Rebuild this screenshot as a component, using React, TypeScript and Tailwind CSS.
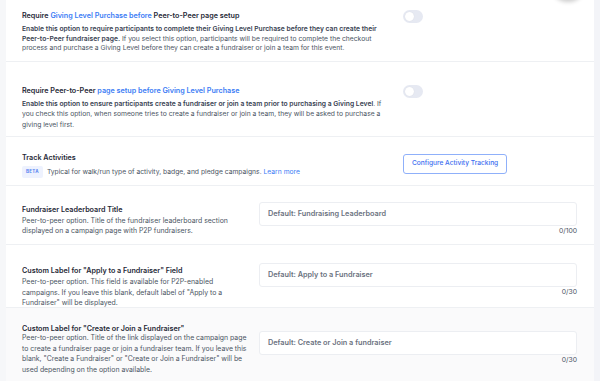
import React from "react";

const Toggle = () => (
  <div className="w-[20px] h-[13px] rounded-full bg-[#e6e9f2] p-[2px] flex items-center">
    <div className="w-[9px] h-[9px] rounded-full bg-white shadow-[0_0_1px_rgba(0,0,0,0.1)]" />
  </div>
);

const InputCol = ({ placeholder, max, mt }: { placeholder: string; max: string; mt: string }) => (
  <div className={`w-[318px] ml-auto flex flex-col ${mt}`}>
    <div className="h-[24px] rounded-[3px] border border-[#eceef2] bg-white flex items-center px-[8px] text-[7.3px] font-semibold text-[#6b7280]">
      {placeholder}
    </div>
    <div className="text-right text-[6.8px] text-[#4b5563] leading-[10px]">{max}</div>
  </div>
);

export default function App() {
  return (
    <div
      className="w-[600px] h-[381px] overflow-hidden bg-[#f4f5f8] flex relative"
      style={{ fontFamily: "Inter, 'Noto Sans', sans-serif" }}
    >
      <div className="w-[6px] shrink-0 bg-[#f6f7f9]" />
      <div className="w-[588px] shrink-0 bg-white flex flex-col">
        {/* Row 1 */}
        <div className="h-[62px] border-b border-[#eef0f3] flex pl-4 pt-[11px]">
          <div className="w-[362px]">
            <div className="text-[7.2px] leading-[10px] font-semibold text-[#1f2937]">
              Require <span className="text-[#3b7cf5]">Giving Level Purchase before</span> Peer-to-Peer page setup
            </div>
            <div className="mt-[3px] text-[6.75px] leading-[9.7px] text-[#4b5563]">
              <span className="font-semibold text-[#374151]">
                Enable this option to require participants to complete their Giving Level Purchase before they can create their Peer-to-Peer fundraiser page.
              </span>{" "}
              If you select this option, participants will be required to complete the checkout process and purchase a Giving Level before they can create a fundraiser or join a team for this event.
            </div>
          </div>
          <div className="ml-[19px] mt-[-1px]">
            <Toggle />
          </div>
        </div>
        {/* Row 2 */}
        <div className="h-[75px] border-b border-[#eef0f3] flex pl-4 pt-[24px]">
          <div className="w-[362px]">
            <div className="text-[7.2px] leading-[10px] font-semibold text-[#1f2937]">
              Require Peer-to-Peer <span className="text-[#3b7cf5]">page setup before Giving Level Purchase</span>
            </div>
            <div className="mt-[3px] text-[6.75px] leading-[10.3px] text-[#4b5563]">
              <span className="font-semibold text-[#374151]">
                Enable this option to ensure participants create a fundraiser or join a team prior to purchasing a Giving Level
              </span>
              . If you check this option, when someone tries to create a fundraiser or join a team, they will be asked to purchase a giving level first.
            </div>
          </div>
          <div className="ml-[19px] mt-[-1px]">
            <Toggle />
          </div>
        </div>
        {/* Row 3 */}
        <div className="h-[49px] border-b border-[#eef0f3] flex items-start pl-4 pt-[16px]">
          <div className="w-[362px]">
            <div className="text-[7.2px] leading-[10px] font-semibold text-[#1f2937]">Track Activities</div>
            <div className="mt-[3px] flex items-center text-[6.75px] leading-[10px] text-[#4b5563]">
              <span className="bg-[#eef2fe] text-[#5b86f0] text-[4.5px] font-bold px-[4px] py-[1px] rounded-[2px] mr-[4px] tracking-[0.3px]">
                BETA
              </span>
              Typical for walk/run type of activity, badge, and pledge campaigns.&nbsp;
              <span className="text-[#3b7cf5]">Learn more</span>
            </div>
          </div>
          <div className="ml-[19px] mt-[1px] h-[20px] px-[8px] rounded-[3px] border border-[#8fb0fa] text-[#3b6ef0] text-[6.6px] font-medium flex items-center">
            Configure Activity Tracking
          </div>
        </div>
        {/* Row 4 */}
        <div className="h-[59px] border-b border-[#eef0f3] flex items-start pl-4 pr-[17px] pt-[16px]">
          <div className="w-[232px] mt-[3px]">
            <div className="text-[7.2px] leading-[10px] font-semibold text-[#1f2937]">Fundraiser Leaderboard Title</div>
            <div className="mt-[1px] text-[6.9px] leading-[10px] text-[#4b5563]">
              Peer-to-peer option. Title of the fundraiser leaderboard section
              <br />
              displayed on a campaign page with P2P fundraisers.
            </div>
          </div>
          <InputCol placeholder="Default: Fundraising Leaderboard" max="0/100" mt="mt-0" />
        </div>
        {/* Row 5 */}
        <div className="h-[63px] border-b border-[#eef0f3] flex items-start pl-4 pr-[17px] pt-[17px]">
          <div className="w-[232px] mt-[4px]">
            <div className="text-[7.2px] leading-[10px] font-semibold text-[#1f2937]">
              Custom Label for "Apply to a Fundraiser" Field
            </div>
            <div className="mt-[1px] text-[6.9px] leading-[10.5px] text-[#4b5563]">
              Peer-to-peer option. This field is available for P2P-enabled
              <br />
              campaigns. If you leave this blank, default label of "Apply to a
              <br />
              Fundraiser" will be displayed.
            </div>
          </div>
          <InputCol placeholder="Default: Apply to a Fundraiser" max="0/30" mt="mt-[1px]" />
        </div>
        {/* Row 6 */}
        <div className="flex-1 bg-[#fafafb] flex items-start pl-4 pr-[17px] pt-[15px]">
          <div className="w-[232px] mt-[1px]">
            <div className="text-[7.2px] leading-[10px] font-semibold text-[#1f2937]">
              Custom Label for "Create or Join a Fundraiser"
            </div>
            <div className="mt-[-1px] text-[6.9px] leading-[10.5px] text-[#4b5563]">
              Peer-to-peer option. Title of the link displayed on the campaign page
              <br />
              to create a fundraiser page or join a fundraiser team. If you leave this
              <br />
              blank, "Create a Fundraiser" or "Create or Join a Fundraiser" will be
              <br />
              used depending on the option available.
            </div>
          </div>
          <InputCol placeholder="Default: Create or Join a fundraiser" max="0/30" mt="mt-[8px]" />
        </div>
      </div>
      <div className="flex-1 bg-[#f3f4f8]" />
      <div className="absolute top-[-36px] left-[550px] w-[36px] h-[36px] rounded-full bg-white shadow-[0_2px_4px_rgba(0,0,0,0.2)]" />
    </div>
  );
}
